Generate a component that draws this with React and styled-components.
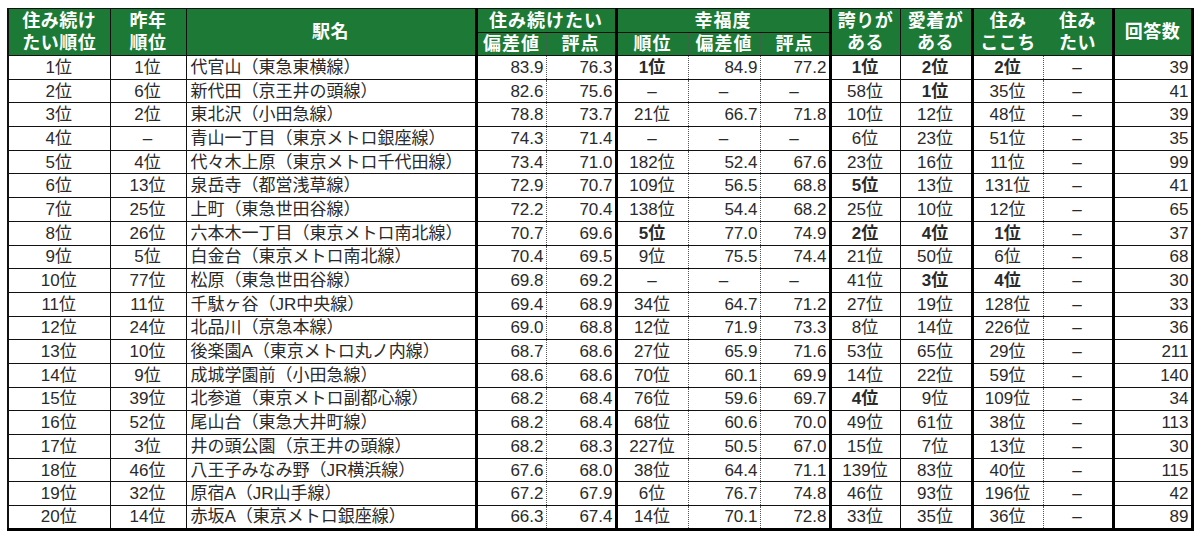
import React from "react";
import styled, { createGlobalStyle } from "styled-components";

const Global = createGlobalStyle`
  html, body { margin: 0; padding: 0; background: #fff; }
  body { font-family: "Liberation Sans", "Noto Sans CJK JP", sans-serif; }
`;

const Page = styled.div`
  padding: 8px 0 0 7px;
  width: 1200px;
  height: 536px;
  box-sizing: border-box;
  overflow: hidden;
`;

const Table = styled.table`
  border-collapse: collapse;
  table-layout: fixed;
  width: 1185px;
  border-top: 1px solid #111;
  border-left: 2px solid #111;
  border-right: 3px solid #000;
  border-bottom: 3px solid #000;
  color: #2a2a2a;
`;

const borderFor = (t) => {
  switch (t) {
    case "thick":
      return "3px solid #000";
    case "dot":
      return "1px dotted #555";
    case "outer":
      return "2px solid #111";
    default:
      return "1px solid #111";
  }
};

const HeadCell = styled.th`
  background: #1c7a36;
  color: #fff;
  font-family: "Liberation Sans", "Noto Sans CJK JP", sans-serif;
  font-weight: 700;
  font-size: 18px;
  line-height: 22px;
  letter-spacing: ${(p) => (p.$wide ? "1px" : "0.5px")};
  text-align: center;
  vertical-align: middle;
  padding: 0;
  height: ${(p) => p.$h || 22}px;
  border-bottom: 1px solid #111;
  border-left: ${(p) => borderFor(p.$left)};
  white-space: nowrap;
`;

const Line = styled.span`
  display: block;
`;

const Row = styled.tr`
  height: 23.7px;
`;

const Cell = styled.td`
  font-size: 17px;
  line-height: 1;
  font-weight: ${(p) => (p.$bold ? 700 : 400)};
  text-align: ${(p) => p.$align};
  vertical-align: middle;
  padding: 0 ${(p) => (p.$align === "right" ? "2px" : "3px")} 0
    ${(p) => (p.$align === "left" ? "4px" : "2px")};
  border-bottom: 1px solid #111;
  border-left: ${(p) => borderFor(p.$left)};
  white-space: nowrap;
  overflow: hidden;
`;

const cols = [
  { w: 102, left: "outer", align: "center" },
  { w: 76, left: "thin", align: "center" },
  { w: 290, left: "thin", align: "left" },
  { w: 70, left: "thick", align: "right" },
  { w: 70, left: "dot", align: "right" },
  { w: 72, left: "thick", align: "center" },
  { w: 72, left: "dot", align: "right" },
  { w: 70, left: "dot", align: "right" },
  { w: 70, left: "thick", align: "center" },
  { w: 72, left: "thin", align: "center" },
  { w: 71, left: "thick", align: "center" },
  { w: 70, left: "dot", align: "center" },
  { w: 79, left: "thick", align: "right" },
];

const D = "–";

const rows = [
  ["1位", "1位", "代官山（東急東横線）", "83.9", "76.3", "*1位", "84.9", "77.2", "*1位", "*2位", "*2位", D, "39"],
  ["2位", "6位", "新代田（京王井の頭線）", "82.6", "75.6", D, D, D, "58位", "*1位", "35位", D, "41"],
  ["3位", "2位", "東北沢（小田急線）", "78.8", "73.7", "21位", "66.7", "71.8", "10位", "12位", "48位", D, "39"],
  ["4位", D, "青山一丁目（東京メトロ銀座線）", "74.3", "71.4", D, D, D, "6位", "23位", "51位", D, "35"],
  ["5位", "4位", "代々木上原（東京メトロ千代田線）", "73.4", "71.0", "182位", "52.4", "67.6", "23位", "16位", "11位", D, "99"],
  ["6位", "13位", "泉岳寺（都営浅草線）", "72.9", "70.7", "109位", "56.5", "68.8", "*5位", "13位", "131位", D, "41"],
  ["7位", "25位", "上町（東急世田谷線）", "72.2", "70.4", "138位", "54.4", "68.2", "25位", "10位", "12位", D, "65"],
  ["8位", "26位", "六本木一丁目（東京メトロ南北線）", "70.7", "69.6", "*5位", "77.0", "74.9", "*2位", "*4位", "*1位", D, "37"],
  ["9位", "5位", "白金台（東京メトロ南北線）", "70.4", "69.5", "9位", "75.5", "74.4", "21位", "50位", "6位", D, "68"],
  ["10位", "77位", "松原（東急世田谷線）", "69.8", "69.2", D, D, D, "41位", "*3位", "*4位", D, "30"],
  ["11位", "11位", "千駄ヶ谷（JR中央線）", "69.4", "68.9", "34位", "64.7", "71.2", "27位", "19位", "128位", D, "33"],
  ["12位", "24位", "北品川（京急本線）", "69.0", "68.8", "12位", "71.9", "73.3", "8位", "14位", "226位", D, "36"],
  ["13位", "10位", "後楽園A（東京メトロ丸ノ内線）", "68.7", "68.6", "27位", "65.9", "71.6", "53位", "65位", "29位", D, "211"],
  ["14位", "9位", "成城学園前（小田急線）", "68.6", "68.6", "70位", "60.1", "69.9", "14位", "22位", "59位", D, "140"],
  ["15位", "39位", "北参道（東京メトロ副都心線）", "68.2", "68.4", "76位", "59.6", "69.7", "*4位", "9位", "109位", D, "34"],
  ["16位", "52位", "尾山台（東急大井町線）", "68.2", "68.4", "68位", "60.6", "70.0", "49位", "61位", "38位", D, "113"],
  ["17位", "3位", "井の頭公園（京王井の頭線）", "68.2", "68.3", "227位", "50.5", "67.0", "15位", "7位", "13位", D, "30"],
  ["18位", "46位", "八王子みなみ野（JR横浜線）", "67.6", "68.0", "38位", "64.4", "71.1", "139位", "83位", "40位", D, "115"],
  ["19位", "32位", "原宿A（JR山手線）", "67.2", "67.9", "6位", "76.7", "74.8", "46位", "93位", "196位", D, "42"],
  ["20位", "14位", "赤坂A（東京メトロ銀座線）", "66.3", "67.4", "14位", "70.1", "72.8", "33位", "35位", "36位", D, "89"],
];

const TwoLine = ({ a, b }) => (
  <>
    <Line>{a}</Line>
    <Line>{b}</Line>
  </>
);

export default function App() {
  return (
    <Page>
      <Global />
      <Table>
        <colgroup>
          {cols.map((c, i) => (
            <col key={i} style={{ width: c.w }} />
          ))}
        </colgroup>
        <thead>
          <tr>
            <HeadCell rowSpan={2} $left="outer" $h={23}>
              <TwoLine a="住み続け" b="たい順位" />
            </HeadCell>
            <HeadCell rowSpan={2} $left="thin">
              <TwoLine a="昨年" b="順位" />
            </HeadCell>
            <HeadCell rowSpan={2} $left="thin">
              駅名
            </HeadCell>
            <HeadCell colSpan={2} $left="thick" $h={23} $wide>
              住み続けたい
            </HeadCell>
            <HeadCell colSpan={3} $left="thick" $h={23} $wide>
              幸福度
            </HeadCell>
            <HeadCell rowSpan={2} $left="thick">
              <TwoLine a="誇りが" b="ある" />
            </HeadCell>
            <HeadCell rowSpan={2} $left="thin">
              <TwoLine a="愛着が" b="ある" />
            </HeadCell>
            <HeadCell rowSpan={2} $left="thick">
              <TwoLine a="住み" b="ここち" />
            </HeadCell>
            <HeadCell rowSpan={2} $left="dot">
              <TwoLine a="住み" b="たい" />
            </HeadCell>
            <HeadCell rowSpan={2} $left="thick">
              回答数
            </HeadCell>
          </tr>
          <tr>
            <HeadCell $left="thick" $wide>偏差値</HeadCell>
            <HeadCell $left="dot" $wide>評点</HeadCell>
            <HeadCell $left="thick" $wide>順位</HeadCell>
            <HeadCell $left="dot" $wide>偏差値</HeadCell>
            <HeadCell $left="dot" $wide>評点</HeadCell>
          </tr>
        </thead>
        <tbody>
          {rows.map((r, ri) => (
            <Row key={ri}>
              {r.map((v, ci) => {
                const bold = v.startsWith("*");
                const text = bold ? v.slice(1) : v;
                const c = cols[ci];
                const align = text === D ? "center" : c.align;
                return (
                  <Cell key={ci} $left={c.left} $align={align} $bold={bold}>
                    {text}
                  </Cell>
                );
              })}
            </Row>
          ))}
        </tbody>
      </Table>
    </Page>
  );
}
